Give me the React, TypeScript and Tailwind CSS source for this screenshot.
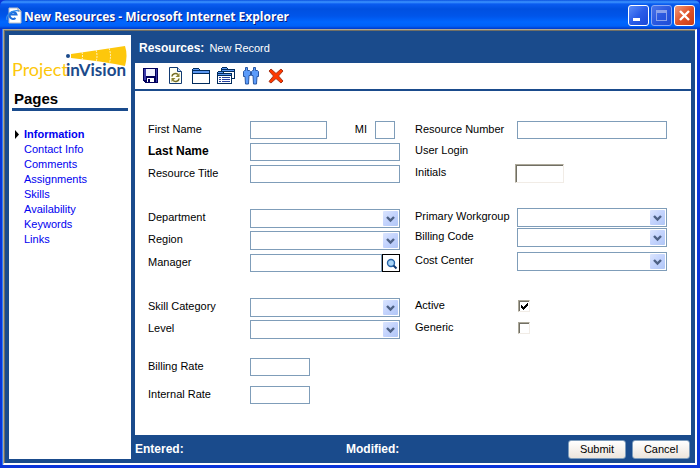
import type { ReactNode } from "react";

const pages = ["Contact Info", "Comments", "Assignments", "Skills", "Availability", "Keywords", "Links"];

function Row({ id, label, bold, className = "h-[22px]", children }: { id: string; label: string; bold?: boolean; className?: string; children?: ReactNode }) {
  return (
    <div className={`flex items-center ${className}`}>
      <label htmlFor={id} className={`w-[102px] shrink-0 pb-px whitespace-nowrap ${bold ? "text-[12px] font-bold" : ""}`}>
        {label}
      </label>
      {children}
    </div>
  );
}

function TextBox({ id, className = "w-[150px]" }: { id: string; className?: string }) {
  return <input id={id} type="text" className={`h-[18px] border border-[#7f9db9] bg-white px-1 outline-none ${className}`} />;
}

function DropDown({ id }: { id: string }) {
  return (
    <div className="grid w-[150px] items-center">
      <select id={id} className="col-start-1 row-start-1 h-[19px] w-full appearance-none border border-[#7f9db9] bg-white px-1 outline-none">
        <option></option>
      </select>
      <svg width="15" height="15" viewBox="0 0 15 15" className="pointer-events-none col-start-1 row-start-1 mr-[2px] justify-self-end">
        <defs>
          <linearGradient id={`${id}-face`} x1="0" y1="0" x2="1" y2="1">
            <stop offset="0" stopColor="#dbe5fe" />
            <stop offset="0.5" stopColor="#c3d3fd" />
            <stop offset="1" stopColor="#b0c6f6" />
          </linearGradient>
        </defs>
        <rect width="15" height="15" rx="1" fill={`url(#${id}-face)`} />
        <path d="M4 6L7.5 9.5L11 6" fill="none" stroke="#4d6185" strokeWidth="2.4" />
      </svg>
    </div>
  );
}

function CheckBox({ id, checked }: { id: string; checked?: boolean }) {
  return (
    <div className="grid p-px">
      <input
        id={id}
        type="checkbox"
        defaultChecked={checked}
        className="peer col-start-1 row-start-1 size-3 appearance-none border border-[#f1ece6] border-t-[#aca899] border-l-[#aca899] bg-white shadow-[inset_1px_1px_0_#716f64]"
      />
      <svg width="12" height="12" viewBox="0 0 12 12" className="pointer-events-none invisible col-start-1 row-start-1 peer-checked:visible" shapeRendering="crispEdges">
        <path d="M3 5h1v1h1v1h1v-1h1v-1h1v-1h1v-1h1v3h-1v1h-1v1h-1v1h-1v1h-1v-1h-1v-1h-1z" fill="#000" />
      </svg>
    </div>
  );
}

function ToolButton({ label, children }: { label: string; children: ReactNode }) {
  return (
    <button type="button" aria-label={label} className="flex size-5 items-center justify-center">
      <svg width="20" height="20" viewBox="0 0 20 20">
        {children}
      </svg>
    </button>
  );
}

function Logo() {
  return (
    <svg width="118" height="42" viewBox="0 0 118 42" className="mx-[2px] block">
      <path d="M60 11Q88 7 114 3Q117 12 114 23Q90 18 60 15z" fill="#fdc70c" />
      <path d="M71 9q1 4 0 8M85 7q2 6 0 12M98 5q3 8 0 16" fill="none" stroke="#fff3c4" strokeWidth="1" strokeDasharray="2 1" />
      <text x="1" y="33" fontFamily="Lato, sans-serif" fontSize="18" fill="#fdc70c">
        Project
      </text>
      <text x="55" y="33" fontFamily="Lato, sans-serif" fontSize="17" fontWeight="700" fill="#1b4a8b">
        inVision
      </text>
      <circle cx="57" cy="13" r="2" fill="#1b4a8b" />
    </svg>
  );
}

export default function App() {
  return (
    <div className="flex min-h-screen flex-col bg-[#0b35d8] font-['Liberation_Sans',Arial,sans-serif] text-[11px] leading-[15px] text-black">
      <header className="flex h-[29px] shrink-0 items-center rounded-t-[6px] bg-[linear-gradient(#0a50e0_0px,#3d95ff_2px,#0a5cf0_4px,#0050e0_9px,#0055ea_16px,#0066ff_22px,#0061f8_26px,#0038c8_29px)] pr-[5px] pl-[6px]">
        <svg width="16" height="18" viewBox="0 0 16 18">
          <path d="M3 2h9l3 3v12H3z" fill="#fff" stroke="#b9bfc9" strokeWidth="1" />
          <path d="M12 2v3h3" fill="#dfe5ee" stroke="#8a8f99" strokeWidth="1" />
          <path d="M3.500 8.500h7a3.500 3.500 0 1 0-1 3.500" fill="none" stroke="#1e6fdc" strokeWidth="2" />
          <path d="M1 14C-1 10 6 3 13 5" fill="none" stroke="#2f8bee" strokeWidth="1.300" />
        </svg>
        <h1 className="ml-[2px] pt-[3px] font-['Open_Sans',sans-serif] text-[12px] font-bold whitespace-nowrap text-white [text-shadow:1px_1px_0_#0a1c80]">
          New Resources - Microsoft Internet Explorer
        </h1>
        <div className="ml-auto flex gap-[2px] pt-[2px]">
          <button type="button" aria-label="Minimize" className="size-[21px] rounded-[3px] border border-white bg-linear-to-br from-[#5c8cf8] via-[#2a5ce8] to-[#1a48d8]">
            <svg width="19" height="19" viewBox="0 0 19 19">
              <path d="M4 12h7v3H4z" fill="#fff" />
            </svg>
          </button>
          <button type="button" aria-label="Maximize" disabled className="size-[21px] rounded-[3px] border border-[#8aa8f4] bg-linear-to-br from-[#4a74ea] via-[#2a58e0] to-[#1e4cd6]">
            <svg width="19" height="19" viewBox="0 0 19 19" shapeRendering="crispEdges">
              <path d="M4 4h11v11H4zM5 7v7h9V7z" fill="#8aa2ec" fillRule="evenodd" />
            </svg>
          </button>
          <button type="button" aria-label="Close" className="size-[21px] rounded-[3px] border border-white bg-linear-to-br from-[#f09878] via-[#e0532a] to-[#c83c14]">
            <svg width="19" height="19" viewBox="0 0 19 19">
              <path d="M5 5l9 9M14 5l-9 9" stroke="#fff" strokeWidth="2.4" />
            </svg>
          </button>
        </div>
      </header>

      <div className="mr-[3px] mb-[3px] ml-[3px] flex grow flex-col border-t border-r-2 border-b-2 border-l border-t-[#aca899] border-r-white border-b-white border-l-[#aca899] bg-[#1a4b8c] shadow-[-1px_0_0_#2f7dfa]">
        <div className="flex grow border-t border-l border-[#716f64]">
          <aside className="mt-1 mb-1 ml-1 w-[122px] shrink-0 bg-white pt-2">
            <Logo />
            <div className="mx-[3px] mt-[5px] border-b-[3px] border-[#1a4b8c] pb-px">
              <h2 className="ml-[2px] text-[15px] leading-[17px] font-bold">Pages</h2>
            </div>
            <nav className="mt-[16px] flex flex-col items-start pl-[5px] text-[#0000f0]">
              <a href="#information" className="flex items-center font-bold">
                <svg width="5" height="9" viewBox="0 0 5 9" className="mr-[5px]">
                  <path d="M1 0l4 4.500L1 9z" fill="#000" />
                </svg>
                Information
              </a>
              {pages.map((page) => (
                <a key={page} href={`#${page.toLowerCase().replace(" ", "-")}`} className="pl-[10px]">
                  {page}
                </a>
              ))}
            </nav>
          </aside>

          <main className="mr-1 ml-1 flex min-w-0 grow flex-col">
            <div className="flex h-8 items-center gap-[5px] pt-[6px] pb-1 pl-1 text-white">
              <strong className="text-[12px]">Resources:</strong>
              <span>New Record</span>
            </div>
            <div className="flex h-[26px] items-center gap-[5px] bg-white pl-[6px]">
              <ToolButton label="Save">
                <g shapeRendering="crispEdges">
                  <path d="M2 2h15v15H4v-1H3v-1H2z" fill="#00005c" />
                  <path d="M3 3h2v11H3zM15 3h1v13h-1z" fill="#3a3aa8" />
                  <path d="M5 3h9v7H5z" fill="#f0f2ff" />
                  <path d="M6 12h7v4H6z" fill="#fff" />
                  <path d="M7 13h2v3H7z" fill="#00005c" />
                </g>
              </ToolButton>
              <ToolButton label="Refresh">
                <path d="M3.500 1.500h8l4 4v12h-12z" fill="#fffff2" stroke="#123a72" />
                <path d="M11.500 1.500v4h4" fill="#bcd5ff" stroke="#123a72" />
                <path d="M6 10.500a3.500 3 0 0 1 6-2M13 12.500a3.500 3 0 0 1-6 2" fill="none" stroke="#766f24" strokeWidth="1.600" />
                <path d="M13.500 7v4h-4zM5.500 16v-4h4z" fill="#8b842c" />
              </ToolButton>
              <ToolButton label="Folder">
                <g shapeRendering="crispEdges">
                  <path d="M1 3h1V2h6v1h1v1h10v14H1z" fill="#002a5c" />
                  <path d="M2 3h6v1H2zM2 5h16v2H2z" fill="#5a96f0" />
                  <path d="M2 8h16v9H2z" fill="#fff" />
                </g>
              </ToolButton>
              <ToolButton label="Folders">
                <g shapeRendering="crispEdges">
                  <path d="M5 2h1V1h5v1h1v1h7v10H5z" fill="#002a5c" />
                  <path d="M6 2h5v1H6zM6 4h12v1H6z" fill="#5a96f0" />
                  <path d="M6 6h12v6H6z" fill="#fff" />
                  <path d="M1 6h1V5h5v1h1v1h8v11H1z" fill="#002a5c" />
                  <path d="M2 6h5v1H2zM2 8h13v1H2z" fill="#5a96f0" />
                  <path d="M2 10h13v7H2z" fill="#fff" />
                  <path d="M3 11h2v1H3zM6 11h8v1H6zM3 13h2v1H3zM6 13h8v1H6zM3 15h2v1H3zM6 15h8v1H6z" fill="#2440a0" />
                </g>
              </ToolButton>
              <ToolButton label="People">
                <g fill="#5b9bfa" stroke="#2a58a4" strokeWidth="1">
                  <path d="M4.500 1.500h2v3h2l1 1v4H8L7.500 18h-3L4 10.500H2.500v-5l1-1h1z" />
                  <path d="M12.500 1.500h2v3h2l1 1v5H16l-.5 7.500h-3L12 9.500h-1.500v-4l1-1h1z" />
                </g>
              </ToolButton>
              <ToolButton label="Delete">
                <path d="M5 3l5 4.500L15 3l2 2-4.500 5 4.500 5-2 2-5-4.500L5 17l-2-1.500L7.500 10 3 5z" fill="#ff3a00" stroke="#a83418" strokeWidth="1" />
              </ToolButton>
            </div>

            <form className="mt-[2px] flex grow flex-wrap content-start gap-x-[15px] bg-white pt-7 pl-[13px]">
              <div className="w-[252px]">
                <Row id="first-name" label="First Name">
                  <div className="flex w-[145px] items-center">
                    <TextBox id="first-name" className="w-[77px]" />
                    <label htmlFor="mi" className="mr-2 ml-auto pb-px">
                      MI
                    </label>
                    <TextBox id="mi" className="w-5" />
                  </div>
                </Row>
                <Row id="last-name" label="Last Name" bold>
                  <TextBox id="last-name" />
                </Row>
                <Row id="resource-title" label="Resource Title">
                  <TextBox id="resource-title" />
                </Row>
                <div className="mt-[22px]">
                  <Row id="department" label="Department">
                    <DropDown id="department" />
                  </Row>
                  <Row id="region" label="Region">
                    <DropDown id="region" />
                  </Row>
                  <Row id="manager" label="Manager" className="h-6">
                    <TextBox id="manager" className="w-[132px]" />
                    <button type="button" aria-label="Find manager" className="flex size-[18px] items-center justify-center border border-black bg-white">
                      <svg width="14" height="14" viewBox="0 0 14 14">
                        <circle cx="7" cy="7" r="3.500" fill="#a9d4f7" stroke="#2563a8" strokeWidth="1.400" />
                        <path d="M9.500 9.500l3 3" stroke="#123a72" strokeWidth="2" />
                      </svg>
                    </button>
                  </Row>
                </div>
                <div className="mt-[21px]">
                  <Row id="skill-category" label="Skill Category">
                    <DropDown id="skill-category" />
                  </Row>
                  <Row id="level" label="Level">
                    <DropDown id="level" />
                  </Row>
                </div>
                <div className="mt-4 flex flex-col gap-[6px]">
                  <Row id="billing-rate" label="Billing Rate">
                    <TextBox id="billing-rate" className="w-[60px]" />
                  </Row>
                  <Row id="internal-rate" label="Internal Rate">
                    <TextBox id="internal-rate" className="w-[60px]" />
                  </Row>
                </div>
              </div>

              <div className="w-[252px]">
                <Row id="resource-number" label="Resource Number">
                  <TextBox id="resource-number" />
                </Row>
                <div className="flex h-5 items-center pb-px">User Login</div>
                <div className="flex h-6 items-center">
                  <label htmlFor="initials" className="w-[100px] pb-px">
                    Initials
                  </label>
                  <input
                    id="initials"
                    type="text"
                    className="h-[19px] w-[49px] border border-[#f1ece6] border-t-[#aca899] border-l-[#aca899] px-1 shadow-[inset_1px_1px_0_#716f64] outline-none"
                  />
                </div>
                <div className="mt-[22px]">
                  <Row id="workgroup" label="Primary Workgroup" className="h-5">
                    <DropDown id="workgroup" />
                  </Row>
                  <Row id="billing-code" label="Billing Code" className="h-5">
                    <DropDown id="billing-code" />
                  </Row>
                  <Row id="cost-center" label="Cost Center" className="mt-1 h-5">
                    <DropDown id="cost-center" />
                  </Row>
                </div>
                <div className="mt-6">
                  <Row id="active" label="Active">
                    <CheckBox id="active" checked />
                  </Row>
                  <Row id="generic" label="Generic">
                    <CheckBox id="generic" />
                  </Row>
                </div>
              </div>
            </form>

            <footer className="flex h-7 shrink-0 items-center text-[12px] text-white">
              <strong className="w-[211px]">Entered:</strong>
              <strong>Modified:</strong>
              <div className="mr-px ml-auto flex gap-[6px] text-[11px] text-black">
                <button type="submit" className="h-[19px] w-[58px] rounded-[3px] border border-[#7d9cbc] bg-linear-to-b from-white to-[#ece4dc]">
                  Submit
                </button>
                <button type="button" className="h-[19px] w-[58px] rounded-[3px] border border-[#7d9cbc] bg-linear-to-b from-white to-[#ece4dc]">
                  Cancel
                </button>
              </div>
            </footer>
          </main>
        </div>
      </div>
    </div>
  );
}
